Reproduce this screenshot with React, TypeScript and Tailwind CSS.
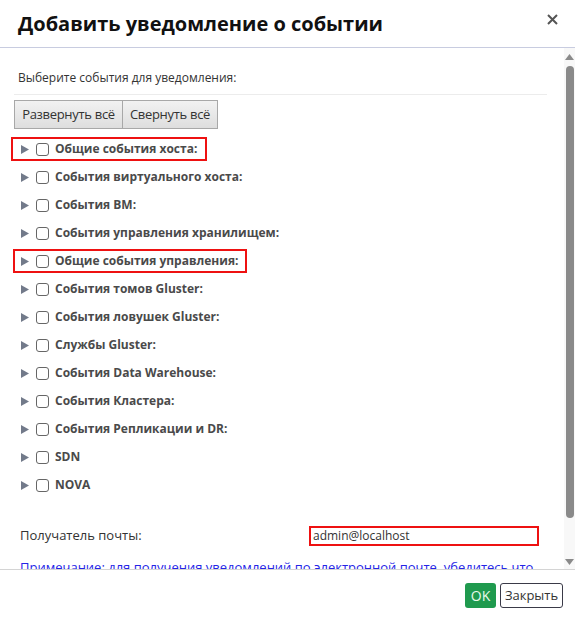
import React from 'react';

type EventGroup = { label: string; box?: 'host' | 'mgmt' };

const groups: EventGroup[] = [
  { label: 'Общие события хоста:', box: 'host' },
  { label: 'События виртуального хоста:' },
  { label: 'События ВМ:' },
  { label: 'События управления хранилищем:' },
  { label: 'Общие события управления:', box: 'mgmt' },
  { label: 'События томов Gluster:' },
  { label: 'События ловушек Gluster:' },
  { label: 'Службы Gluster:' },
  { label: 'События Data Warehouse:' },
  { label: 'События Кластера:' },
  { label: 'События Репликации и DR:' },
  { label: 'SDN' },
  { label: 'NOVA' },
];

function GroupRow({ group }: { group: EventGroup }) {
  const inner = (
    <>
      <svg width="8" height="9" viewBox="0 0 8 9" className="shrink-0">
        <path d="M0 0 L8 4.5 L0 9 Z" fill="#727a8a" />
      </svg>
      <span className="ml-[7px] w-[13px] h-[13px] border border-[#666] rounded-[3px] bg-white shrink-0" />
      <span className="ml-[6px] text-[12px] font-bold text-[#4a4a4a]">{group.label}</span>
    </>
  );

  if (group.box === 'host') {
    return (
      <div className="h-[28px] flex items-center">
        <div className="ml-[-3px] h-[24px] w-[196px] border-2 border-[#ee1111] flex items-center pl-[8px]">{inner}</div>
      </div>
    );
  }
  if (group.box === 'mgmt') {
    return (
      <div className="h-[28px] flex items-center">
        <div className="ml-[-1px] h-[24px] w-[234px] border-2 border-[#ee1111] flex items-center pl-[6px]">{inner}</div>
      </div>
    );
  }
  return <div className="h-[28px] flex items-center pl-[7px]">{inner}</div>;
}

export default function App() {
  return (
    <div
      className="w-[575px] h-[626px] bg-white flex flex-col overflow-hidden text-[#333]"
      style={{ fontFamily: '"Open Sans", "Noto Sans", sans-serif' }}
    >
      {/* Header */}
      <div className="h-[48px] flex items-center justify-between pl-[18px] pr-[17px] border-b border-[#c8cce0] shrink-0">
        <h1 className="text-[20px] font-bold text-[#111] leading-none">Добавить уведомление о событии</h1>
        <svg width="11" height="11" viewBox="0 0 11 11" className="-mt-[9px]">
          <path d="M1 1 L10 10 M10 1 L1 10" stroke="#555" strokeWidth="2" />
        </svg>
      </div>

      {/* Body */}
      <div className="relative flex-1 overflow-hidden">
        <div className="pl-[14px] pr-[28px] pt-[22px]">
          <p className="pl-[4px] text-[12px] leading-[16px] text-[#333]">Выберите события для уведомления:</p>
          <div className="mt-[8px] h-px bg-[#ececec]" />

          <div className="mt-[5px] flex">
            <button className="h-[29px] w-[109px] whitespace-nowrap text-[13px] tracking-[-0.3px] text-[#333] border border-[#a8a8a8] bg-gradient-to-b from-[#f2f2f2] to-[#dedede]">
              Развернуть всё
            </button>
            <button className="h-[29px] w-[96px] -ml-px whitespace-nowrap text-[13px] tracking-[-0.3px] text-[#333] border border-[#a8a8a8] bg-gradient-to-b from-[#f2f2f2] to-[#dedede]">
              Свернуть всё
            </button>
          </div>

          <div className="mt-[6px]">
            {groups.map((g) => (
              <GroupRow key={g.label} group={g} />
            ))}
          </div>

          <div className="mt-[27px] flex items-center h-[20px]">
            <span className="pl-[6px] w-[295px] text-[13px] text-[#333]">Получатель почты:</span>
            <div className="w-[230px] h-[20px] border-2 border-[#ee1111] flex items-center pl-[2px] text-[12px] text-[#333]">
              admin@localhost
            </div>
          </div>

          <p className="mt-[13px] pl-[6px] text-[13px] leading-[16px] text-[#2424e6] underline whitespace-nowrap">
            Примечание: для получения уведомлений по электронной почте, убедитесь что
          </p>
        </div>

        {/* scrollbar */}
        <div className="absolute right-0 top-0 bottom-0 w-[11px] bg-[#f8f8f8] flex flex-col items-center">
          <svg width="9" height="6" viewBox="0 0 9 6" className="mt-[6px]">
            <path d="M4.5 0 L9 6 L0 6 Z" fill="#8a8a8a" />
          </svg>
          <div className="mt-[6px] w-[8px] h-[452px] rounded-full bg-[#8a8a8a]" />
          <div className="flex-1" />
          <svg width="9" height="6" viewBox="0 0 9 6" className="mb-[4px]">
            <path d="M0 0 L9 0 L4.5 6 Z" fill="#8a8a8a" />
          </svg>
        </div>
      </div>

      {/* Footer */}
      <div className="h-[57px] shrink-0 border-t border-[#d4d4d4] flex items-start justify-end pt-[13px] pr-[12px] gap-[4px]">
        <button className="h-[25px] w-[31px] rounded-[3px] bg-[#1f9a4e] text-[14px] text-[#eafbea]">OK</button>
        <button className="h-[25px] w-[63px] rounded-[3px] border border-[#3a3a48] bg-white text-[13px] text-[#333]">
          Закрыть
        </button>
      </div>
    </div>
  );
}
